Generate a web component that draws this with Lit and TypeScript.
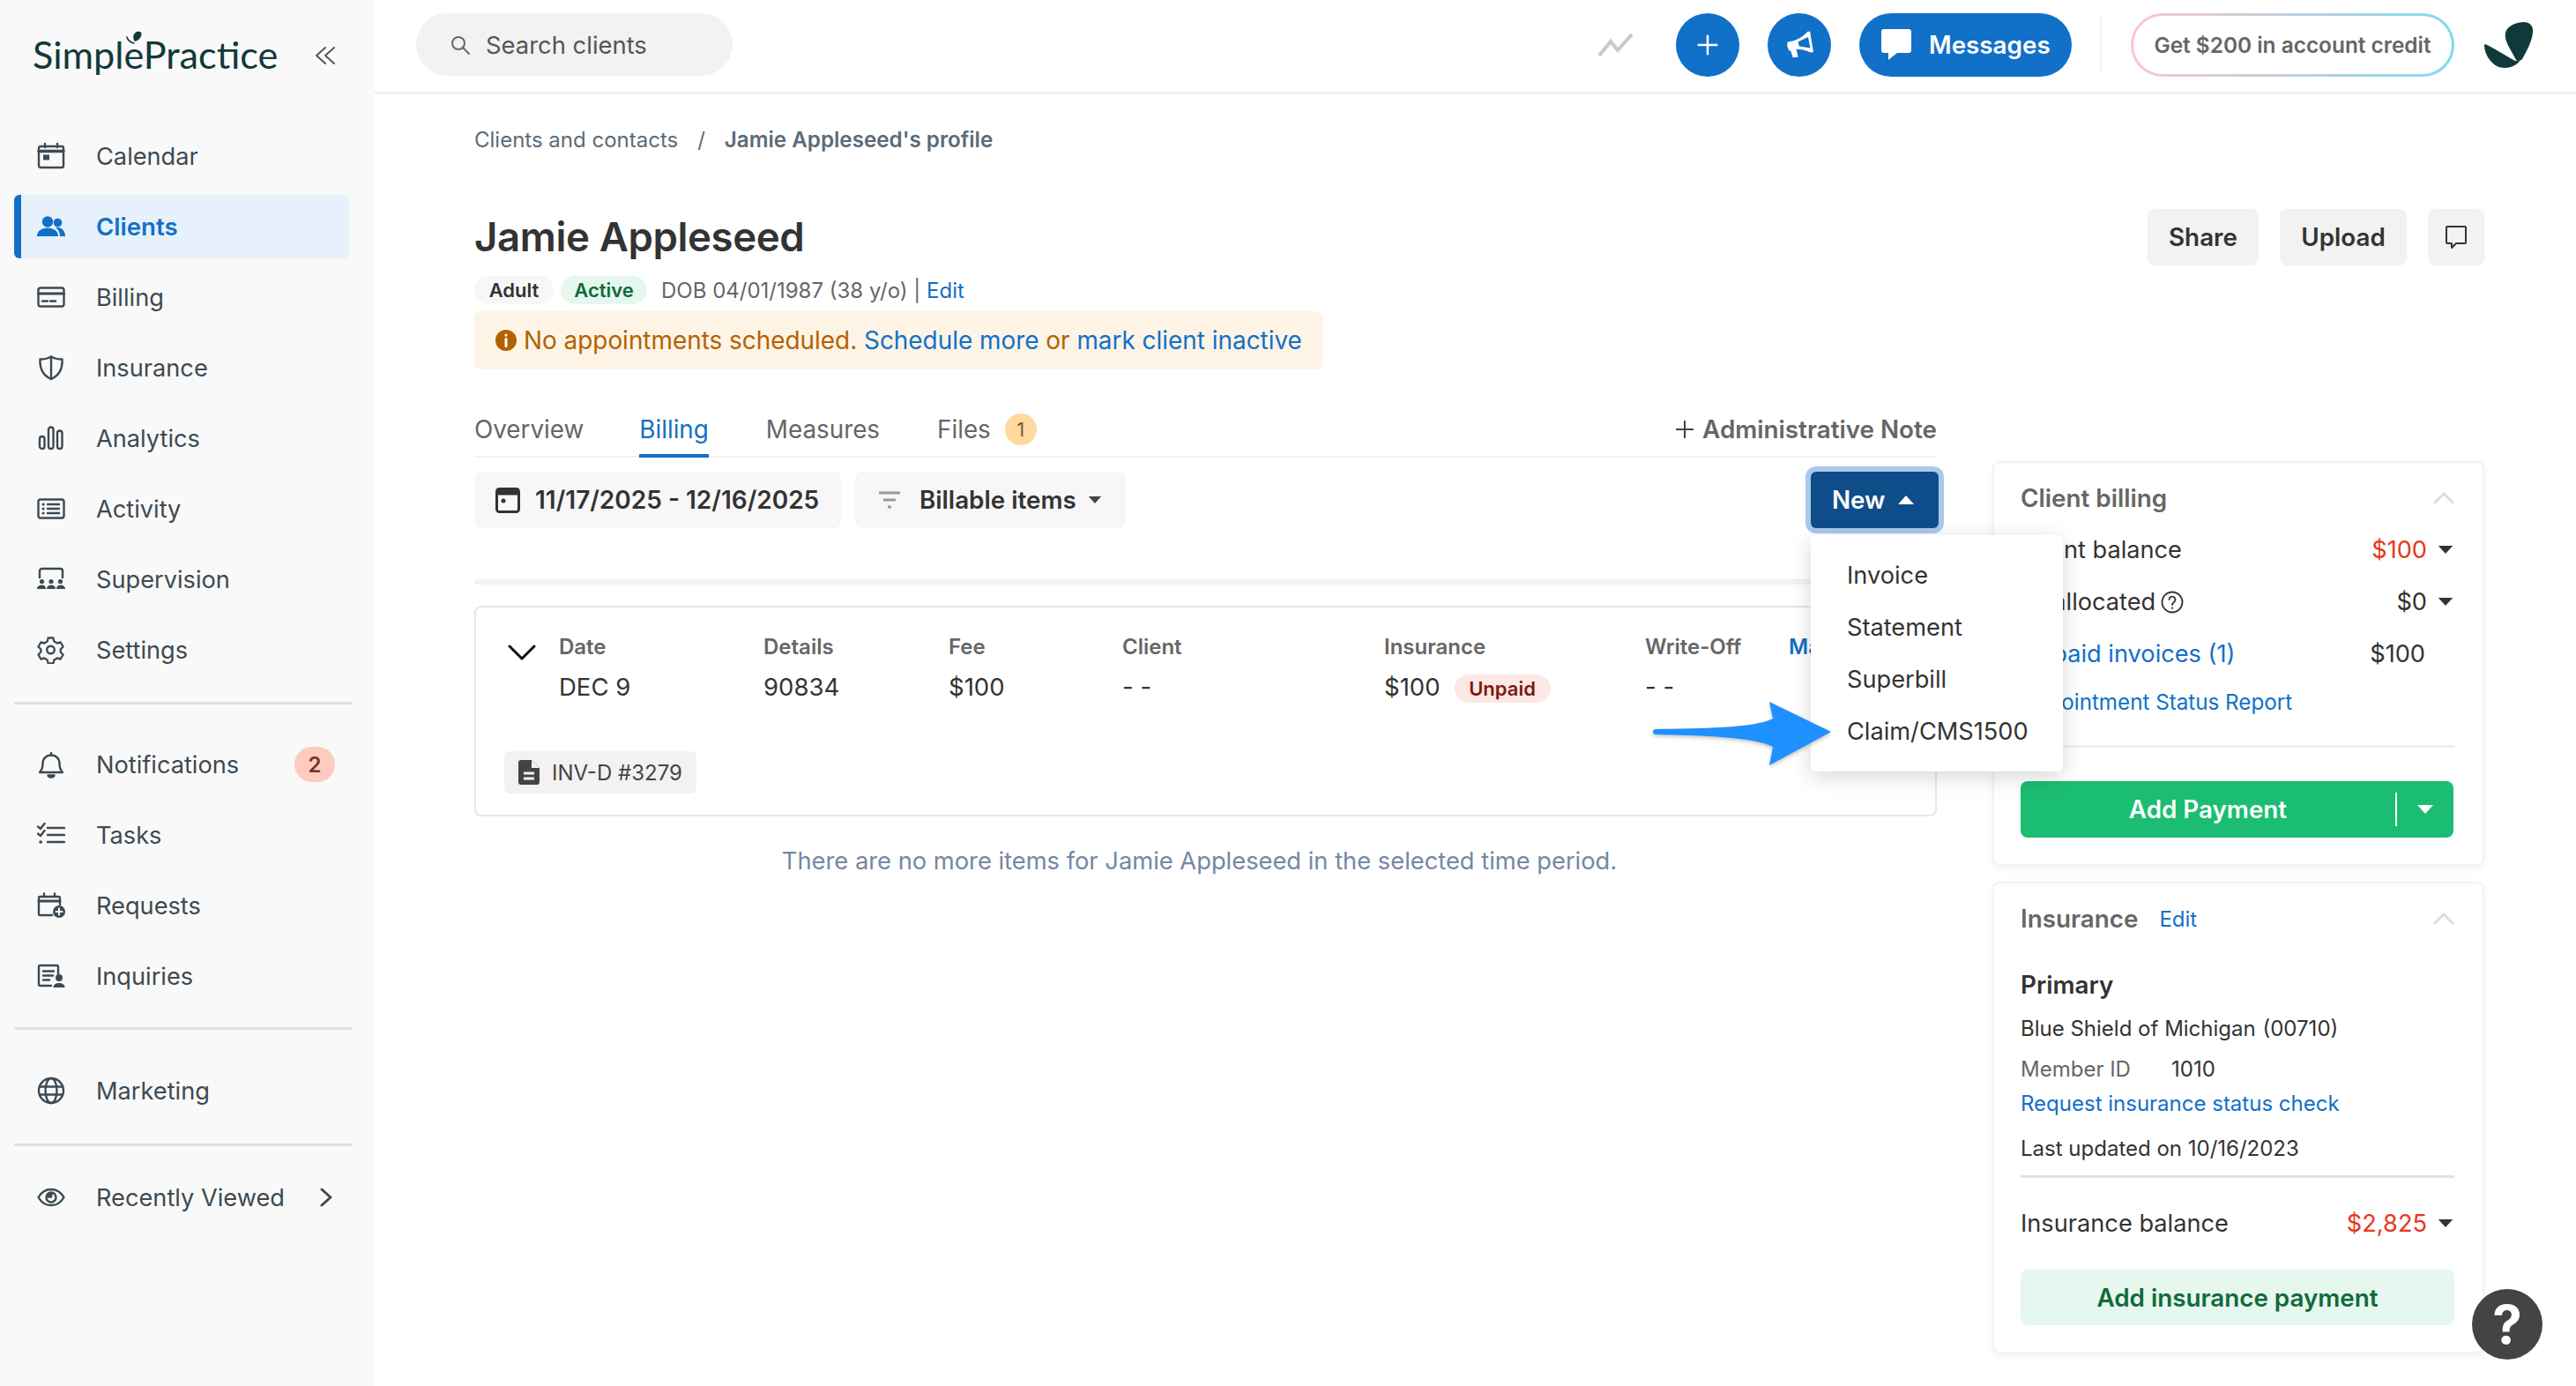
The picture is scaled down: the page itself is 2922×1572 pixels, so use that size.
import { LitElement, html, css, svg } from "lit";
import { customElement } from "lit/decorators.js";

const ic = (body: any, fill = false) => html`<svg class="ic" viewBox="0 0 32 32" fill=${fill ? "currentColor" : "none"} stroke=${fill ? "none" : "currentColor"} stroke-width="2.4" stroke-linecap="round" stroke-linejoin="round">${body}</svg>`;

const icons: Record<string, any> = {
  calendar: ic(svg`<rect x="2" y="5" width="28" height="24" rx="2"/><path d="M2 10.500h28" stroke-width="3.400"/><path d="M9 2v4M23 2v4"/><rect x="7" y="14.500" width="7" height="6" fill="currentColor" stroke="none"/>`),
  clients: ic(svg`<circle cx="12" cy="10.500" r="6.200"/><circle cx="23.500" cy="11.500" r="4.800"/><path d="M0 27c0-6 5-9.500 12-9.500S24 21 24 27z"/><path d="M21 16.800c6-.8 11 3 11 10.200h-6c0-4-1.500-7.500-5-10.200z"/>`, true),
  billing: ic(svg`<rect x="1.500" y="5.500" width="29" height="21" rx="2.500"/><path d="M1.500 12h29" stroke-width="3"/><path d="M6 20.500h6M15 20.500h6"/>`),
  shield: ic(svg`<path d="M16 3.500c4 2.300 8.500 3 12.500 3 .5 9-2.500 18-12.500 22.500C6 24.500 3 15.500 3.500 6.500c4 0 8.500-.7 12.500-3z"/><path d="M16 3.500V29"/>`),
  analytics: ic(svg`<rect x="3" y="14" width="5.500" height="14" rx="2.750"/><rect x="13" y="3.500" width="5.500" height="24.500" rx="2.750"/><rect x="23" y="7.500" width="5.500" height="20.500" rx="2.750"/>`),
  activity: ic(svg`<rect x="1.500" y="5.500" width="29" height="21" rx="2.500"/><path d="M12 11h13M12 16h13M12 21h13"/><path d="M7 11h.2M7 16h.2M7 21h.2" stroke-width="3"/>`),
  supervision: ic(svg`<path d="M3 14V6.500A2.500 2.500 0 0 1 5.500 4h21A2.500 2.500 0 0 1 29 6.500V14"/><g fill="currentColor" stroke="none"><circle cx="5.500" cy="18.500" r="2.600"/><circle cx="16" cy="18.500" r="2.600"/><circle cx="26.500" cy="18.500" r="2.600"/><path d="M0 27c0-3 2.500-4.500 5.500-4.500S10 24 10 27zM11 27c0-3 2-4.500 5-4.500s5 1.500 5 4.500zM22 27c0-3 1.500-4.500 4.500-4.500S32 24 32 27z"/></g>`),
  settings: ic(svg`<path d="M12.500 2.500h6l1 4 3.500 2 4-1 3 5-3 3v3l3 3-3 5-4-1-3.500 2-1 4h-6l-1-4-3.500-2-4 1-3-5 3-3v-3l-3-3 3-5 4 1 3.500-2z" transform="translate(.5 0) scale(.97 1)"/><circle cx="15.500" cy="16" r="4.300"/>`),
  bell: ic(svg`<path d="M3 25c3-3 3.500-6 3.500-10C6.500 9.500 10.500 5.500 16 5.500S25.500 9.500 25.500 15c0 4 .5 7 3.500 10z"/><path d="M16 3v2.500"/><path d="M12.500 28.500h7c-.5 1.300-2 2-3.500 2s-3-.7-3.500-2z" fill="currentColor"/>`),
  tasks: ic(svg`<path d="M12 8h19M12 16h19M12 24h19"/><path d="M1 6.500l3 2.500 4.500-6M1 14.500l3 2.500 4.500-6"/><path d="M4 24h.3" stroke-width="3.500"/>`),
  requests: ic(svg`<path d="M17 27H3.500A1.500 1.500 0 0 1 2 25.500V7.500A1.500 1.500 0 0 1 3.500 6h21A1.500 1.500 0 0 1 26 7.500V15"/><path d="M2 11h24" stroke-width="3"/><path d="M8 2.500V6M20 2.500V6"/><circle cx="25" cy="23" r="7" fill="currentColor" stroke="none"/><path d="M25 19.500v7M21.500 23h7" stroke="#fff" stroke-width="2"/>`),
  inquiries: ic(svg`<path d="M16 27H3.500A1.500 1.500 0 0 1 2 25.500V5.500A1.500 1.500 0 0 1 3.500 4h19A1.500 1.500 0 0 1 24 5.500V14"/><path d="M7 10.500h12M7 15.500h11M7 20.500h7"/><circle cx="25" cy="18" r="4" fill="currentColor" stroke="none"/><path d="M18.500 29c0-3.500 3-5 6.500-5s6.500 1.500 6.500 5z" fill="currentColor" stroke="none"/>`),
  globe: ic(svg`<circle cx="16" cy="16" r="14"/><ellipse cx="16" cy="16" rx="6.500" ry="14"/><path d="M3 11.500h26M3 20.500h26"/>`),
  eye: ic(svg`<path d="M1.500 16C5 10 10 7 16 7s11 3 14.500 9C27 22 22 25 16 25S5 22 1.500 16z"/><circle cx="16" cy="16" r="5.500"/><path d="M12.500 15.500a4 4 0 0 1 4-3.500l-.5 3.500z" fill="currentColor"/>`),
};

const NAV1 = [
  ["calendar", "Calendar"], ["clients", "Clients"], ["billing", "Billing"], ["shield", "Insurance"],
  ["analytics", "Analytics"], ["activity", "Activity"], ["supervision", "Supervision"], ["settings", "Settings"],
];
const NAV2 = [["bell", "Notifications"], ["tasks", "Tasks"], ["requests", "Requests"], ["inquiries", "Inquiries"]];

const COLS = [
  ["Date", "DEC 9"], ["Details", "90834"], ["Fee", "$100"], ["Client", "- -"],
  ["Insurance", "$100"], ["Write-Off", "- -"],
];

const caret = (up = false) => html`<svg class="caret" viewBox="0 0 20 12"><path d=${up ? "M10 1l9 10H1z" : "M1 1h18l-9 10z"} fill="currentColor"/></svg>`;
const chevUp = html`<svg class="chev-up" viewBox="0 0 24 14" fill="none" stroke="currentColor" stroke-width="3" stroke-linecap="round" stroke-linejoin="round"><path d="M2 12L12 2l10 10"/></svg>`;

@customElement("app-root")
export class AppRoot extends LitElement {
  static styles = css`
    :host { display: block; width: 100vw; height: 100vh; overflow: hidden; position: relative; font-family: Inter, "Liberation Sans", sans-serif; font-size: 27.800px; color: #333; background: #fff; }
    * { box-sizing: border-box; }
    a { color: #1170c8; text-decoration: none; }
    .app { display: flex; height: 100%; }
    .side { width: 424px; flex: none; background: #f9f9f9; padding: 0 24px 0 16px; color: #3d4a52; font-size: 27.200px; }
    .logo-row { height: 137px; padding: 31px 0 0 21px; display: flex; align-items: flex-start; position: relative; }
    .logo { font-family: Lato, sans-serif; font-size: 43.200px; line-height: 60px; color: #12393a; position: relative; }
    .leaf { position: absolute; left: 106px; top: 4px; width: 18px; height: 18px; }
    .collapse { position: absolute; left: 341px; top: 51px; width: 24px; height: 24px; color: #555; }
    .nav-item { height: 80px; display: flex; align-items: center; padding-left: 26px; }
    .nav-item.active { height: 72px; margin: 4px 4px 4px 0; color: #1170c8; background: #e7f1fb; border-left: 8px solid #1170c8; border-radius: 6px; padding-left: 18px; font-weight: 600; font-size: 27.600px; }
    .ic { width: 32px; height: 32px; flex: none; }
    .nav-label { margin-left: 35px; flex: 1; white-space: nowrap; }
    .nav-badge { width: 46px; height: 40px; border-radius: 20px; background: #fdcbc0; color: #7c3026; font-size: 24px; font-weight: 600; display: flex; align-items: center; justify-content: center; margin-right: 20px; }
    .nav-chev { width: 14px; height: 24px; margin-right: 23px; }
    .nav-sep { height: 3px; background: #e1e1e1; }
    .sep-a { margin-top: 19px; margin-bottom: 28px; }
    .sep-b { margin-top: 18px; margin-bottom: 29px; }
    .sep-c { margin-top: 20px; margin-bottom: 18px; }

    .main { flex: 1; min-width: 0; display: flex; flex-direction: column; }
    .top { height: 107px; flex: none; border-bottom: 3px solid #f2f2f2; display: flex; align-items: center; padding: 0 0 3px 48px; }
    .search { width: 359px; height: 71px; border-radius: 36px; background: #f2f2f2; display: flex; align-items: center; padding-left: 38px; color: #555; gap: 17px; font-size: 27.400px; }
    .search svg { width: 24px; height: 24px; color: #666; }
    .spacer { flex: 1; }
    .trend { width: 40px; height: 28px; color: #c9c9c9; margin-right: 48px; }
    .circle { width: 72px; height: 72px; border-radius: 50%; background: #1170c8; color: #fff; display: flex; align-items: center; justify-content: center; margin-right: 32px; }
    .circle svg { width: 34px; height: 34px; }
    .circle svg.mega { width: 31px; height: 31px; }
    .msg { width: 241px; height: 72px; border-radius: 36px; background: #1170c8; color: #fff; font-weight: 600; display: flex; align-items: center; padding-left: 25px; gap: 19px; }
    .msg svg { width: 35px; height: 36px; }
    .vsep { width: 2px; height: 64px; background: #f2f2f2; margin: 0 33px 0 32px; }
    .credit { width: 367px; height: 72px; border-radius: 36px; border: 3px solid transparent; background: linear-gradient(#fff, #fff) padding-box, linear-gradient(90deg, #fcc7cb, #7fd8f0) border-box; color: #666; font-size: 24.400px; font-weight: 600; display: flex; align-items: center; justify-content: center; white-space: nowrap; }
    .brand { width: 58px; height: 54px; margin: 0 47px 0 33px; }

    .content { padding: 31px 104px 0 114px; flex: 1; min-height: 0; }
    .crumbs { height: 40px; display: flex; align-items: center; font-size: 24px; color: #5b6b78; }
    .crumbs .slash { margin: 0 22px; }
    .crumbs b { font-weight: 600; font-size: 24.200px; }
    .title-row { margin-top: 59px; height: 64px; display: flex; align-items: center; }
    h1 { margin: -2px 0 0; font-size: 45.600px; font-weight: 600; color: #333; flex: 1; letter-spacing: -0.4px; }
    .gbtn { height: 64px; background: #f2f2f2; border-radius: 8px; display: flex; align-items: center; justify-content: center; font-weight: 600; margin-left: 24px; }
    .gbtn.share { width: 126px; }
    .gbtn.upload { width: 144px; }
    .gbtn.cmt { width: 64px; }
    .gbtn svg { width: 26px; height: 28px; }
    .meta { margin-top: 12px; height: 32px; display: flex; align-items: center; font-size: 24px; color: #666; }
    .pill { height: 32px; border-radius: 16px; display: flex; align-items: center; justify-content: center; font-size: 22px; font-weight: 600; margin-right: 8px; }
    .pill.adult { width: 90px; background: #f7f7f7; color: #333; }
    .pill.act { width: 98px; background: #e6f7ef; color: #0f6b3a; margin-right: 16px; }
    .banner { margin-top: 8px; width: 963px; height: 66px; border-radius: 8px; background: #fef4e5; color: #b36200; display: flex; align-items: center; padding-left: 24px; white-space: pre; font-size: 27.900px; }
    .banner svg { width: 24px; height: 24px; margin-right: 8px; flex: none; }
    .cols { margin-top: 40px; display: flex; justify-content: space-between; }
    .left { width: 1659px; }
    .right { width: 558px; margin-top: 64px; display: flex; flex-direction: column; gap: 18px; font-size: 27.200px; }
    .tabs { height: 60px; display: flex; box-shadow: inset 0 -2px #f2f2f2; color: #666; }
    .tab { height: 60px; border-bottom: 4px solid transparent; display: flex; align-items: center; margin-right: 65px; }
    .tab:first-child { margin-right: 63px; }
    .tab.on { color: #1170c8; border-color: #1170c8; }
    .tab-badge { width: 36px; height: 36px; border-radius: 50%; background: #ffd9a0; color: #7a5a20; font-size: 22px; display: flex; align-items: center; justify-content: center; margin-left: 16px; }
    .note { margin-left: auto; display: flex; align-items: center; height: 56px; font-weight: 600; gap: 8px; }
    .note svg { width: 24px; height: 24px; }
    .filters { margin-top: 16px; display: flex; align-items: center; font-weight: 600; }
    .fbtn { height: 64px; border-radius: 8px; background: #f7f7f7; display: flex; align-items: center; }
    .fbtn.date { width: 416px; padding-left: 24px; gap: 17px; font-size: 28px; }
    .fbtn.date svg { width: 28px; height: 30px; flex: none; }
    .fbtn.bill { width: 307px; margin-left: 16px; padding-left: 26px; gap: 21px; }
    .fbtn.bill > svg:first-child { width: 26px; height: 26px; color: #999; flex: none; }
    .caret { width: 16px; height: 10px; flex: none; }
    .fbtn.bill .caret { margin-left: -8px; color: #444; }
    .new-wrap { margin-left: auto; position: relative; margin-right: -2px; }
    .new { width: 145px; height: 64px; background: #0f4c8a; color: #fff; border-radius: 6px; box-shadow: 0 0 0 6px #a9c9ea; display: flex; align-items: center; padding-left: 24px; gap: 14px; }
    .new .caret { width: 20px; height: 12px; }
    .menu { position: absolute; z-index: 5; left: 0; top: 72px; width: 286px; height: 268px; background: #fff; border-radius: 6px; box-shadow: 0 6px 24px rgba(0, 0, 0, .16); padding: 16px 0 0 41px; font-weight: 400; font-size: 27.200px; }
    .menu div { height: 59px; display: flex; align-items: center; white-space: nowrap; }
    .gline { margin-top: 58px; height: 6px; background: #f2f2f2; }
    .card { margin-top: 24px; height: 239px; border: 2px solid #e6e6e6; border-radius: 8px; padding: 28px 0 0 32px; }
    .rowtop { display: flex; padding-left: 4px; }
    .chev { width: 32px; height: 18px; margin: 14px 26px 0 0; flex: none; color: #111; }
    .grid { display: grid; grid-template-columns: 232px 210px 197px 297px 296px 163px auto; column-gap: 0; }
    .th { font-size: 24px; line-height: 34px; font-weight: 600; color: #666; }
    .td { margin-top: 8px; line-height: 40px; display: flex; align-items: center; white-space: nowrap; font-size: 27.500px; }
    .unpaid { width: 109px; height: 32px; border-radius: 16px; background: #fce8e5; color: #7c1a0c; font-size: 22px; font-weight: 600; display: flex; align-items: center; justify-content: center; margin: 3px 0 0 16px; }
    .inv { margin-top: 53px; width: 218px; height: 48px; border-radius: 6px; background: #f2f2f2; display: flex; align-items: center; padding-left: 16px; gap: 14px; font-size: 24px; color: #444; }
    .inv svg { width: 24px; height: 28px; flex: none; }
    .none { margin-top: 31px; padding-right: 14px; line-height: 40px; text-align: center; color: #7488a3; font-size: 27.300px; }

    .bcard { border: 2px solid #f2f2f2; border-radius: 8px; box-shadow: 0 4px 10px rgba(0, 0, 0, .05); padding: 20px 32px 0 30px; background: #fff; }
    .bcard.c1 { height: 459px; }
    .bcard.c2 { height: 535px; }
    .bhead { display: flex; align-items: center; height: 40px; font-weight: 600; color: #666; font-size: 27.800px; }
    .bhead a { font-size: 24px; font-weight: 400; margin-left: 24px; }
    .chev-up { width: 24px; height: 14px; margin-left: auto; color: #dcdcdc; }
    .brow { height: 59px; display: flex; align-items: center; white-space: nowrap; }
    .brow .val { margin-left: auto; }
    .red { color: #e8381a; }
    .brow .caret { width: 20px; height: 11px; margin-left: 11px; color: #333; }
    .brow .gap { width: 33px; }
    .q { width: 26px; height: 26px; margin-left: 6px; color: #333; }
    .report { font-size: 24.200px; height: 40px; display: flex; align-items: center; margin-top: 5px; }
    .bsep { height: 3px; background: #efefef; }
    .addpay { margin-top: 38px; width: 491px; height: 64px; border-radius: 8px; background: #1bbd72; color: #fff; font-weight: 600; font-size: 27.800px; display: flex; align-items: center; }
    .addpay .lbl { width: 425px; text-align: center; }
    .addpay i { width: 2px; height: 38px; background: #fff; }
    .addpay .caret { margin-left: 22px; width: 20px; height: 12px; }
    .prim { font-weight: 600; margin-top: 35px; line-height: 40px; font-size: 27.800px; }
    .small { font-size: 24px; line-height: 36px; color: #333; }
    .code { margin-left: 1px; }
    .muted { color: #666; display: inline-block; width: 171px; }
    .ins-sep { height: 3px; background: #e1e1e1; margin-top: 12px; }
    .addins { margin-top: 23px; height: 63px; border-radius: 8px; background: #e6f7ef; color: #0f6b3a; font-weight: 600; font-size: 27.800px; display: flex; align-items: center; justify-content: center; }
    .help { position: absolute; left: 2804px; top: 1462px; width: 80px; height: 80px; border-radius: 50%; background: #444; color: #fff; font-size: 60px; font-weight: 700; display: flex; align-items: center; justify-content: center; z-index: 6; }
    .arrow { position: absolute; left: 1870px; top: 790px; width: 215px; height: 90px; z-index: 7; filter: drop-shadow(0 2px 2px rgba(0, 0, 0, .25)); }
    .bal { margin-top: 22px; }
  `;

  private navItem(i: string, label: string, active = false, extra: any = null) {
    return html`<div class="nav-item ${active ? "active" : ""}">${icons[i]}<span class="nav-label">${label}</span>${extra}</div>`;
  }

  render() {
    return html`
      <div class="app">
        <aside class="side">
          <div class="logo-row">
            <div class="logo">SimplePractice
              <svg class="leaf" viewBox="0 0 18 18"><path d="M10 12C7 8 8 3 12 1c3-1 6 0 5.500 3C17 8 14 11 10 12z" fill="#12393a"/><path d="M1 7c1 4 4 6 8 7" fill="none" stroke="#12393a" stroke-width="1.600" stroke-linecap="round"/></svg>
            </div>
            <svg class="collapse" viewBox="0 0 24 24" fill="none" stroke="currentColor" stroke-width="2" stroke-linecap="round" stroke-linejoin="round"><path d="M12 3L2 12l10 9M22 3L12 12l10 9"/></svg>
          </div>
          ${NAV1.map(([i, l]) => this.navItem(i, l, l === "Clients"))}
          <div class="nav-sep sep-a"></div>
          ${NAV2.map(([i, l]) => this.navItem(i, l, false, l === "Notifications" ? html`<span class="nav-badge">2</span>` : null))}
          <div class="nav-sep sep-b"></div>
          ${this.navItem("globe", "Marketing")}
          <div class="nav-sep sep-c"></div>
          ${this.navItem("eye", "Recently Viewed", false, html`<svg class="nav-chev" viewBox="0 0 14 24" fill="none" stroke="currentColor" stroke-width="3" stroke-linecap="round" stroke-linejoin="round"><path d="M2 3l10 9-10 9"/></svg>`)}
        </aside>
        <div class="main">
          <header class="top">
            <div class="search">
              <svg viewBox="0 0 24 24" fill="none" stroke="currentColor" stroke-width="2"><circle cx="10" cy="10" r="7"/><path d="M15.500 15.500L22 22" stroke-linecap="round"/></svg>
              <span>Search clients</span>
            </div>
            <div class="spacer"></div>
            <svg class="trend" viewBox="0 0 40 28" fill="none" stroke="currentColor" stroke-width="4" stroke-linejoin="miter"><path d="M1 26L14 10l8 10L38 2"/></svg>
            <div class="circle"><svg viewBox="0 0 24 24" fill="none" stroke="currentColor" stroke-width="1.800"><path d="M12 4v16M4 12h16"/></svg></div>
            <div class="circle"><svg class="mega" viewBox="0 0 24 24" fill="currentColor" fill-rule="evenodd"><path d="M19 .5h2L24 18.500l-2.500.5C17 16.500 13 16 9 16l1.500 7-4.500.5-2-6H2.600C1 14 .5 12 1.300 9.800 8 9 14 6 19 .5zM10.500 9.700l8.800-4.200 2 9.500-9.800-1.500z"/></svg></div>
            <div class="msg"><svg viewBox="0 0 35 36" fill="currentColor"><path d="M3 0h28a3 3 0 0 1 3 3v21a3 3 0 0 1-3 3H18L8 35v-8H3a3 3 0 0 1-3-3V3a3 3 0 0 1 3-3z"/></svg>Messages</div>
            <div class="vsep"></div>
            <div class="credit">Get $200 in account credit</div>
            <svg class="brand" viewBox="27 13 58 54"><path d="M64 57C58 45 50 35 52 26c2-8 13-12 21-12 7 0 11 5 10 12-1 10-7 21-12 30-2 2-5 2-7 1z" fill="#12393a"/><path d="M29 39c11 5 23 13 34 19l6-1c-4 6-11 9-18 9-13 0-23-14-23-26z" fill="#12393a"/></svg>
          </header>
          <div class="content">
            <div class="crumbs">Clients and contacts<span class="slash">/</span><b>Jamie Appleseed's profile</b></div>
            <div class="title-row">
              <h1>Jamie Appleseed</h1>
              <div class="gbtn share">Share</div>
              <div class="gbtn upload">Upload</div>
              <div class="gbtn cmt"><svg viewBox="0 0 26 28" fill="none" stroke="#333" stroke-width="2" stroke-linejoin="round"><path d="M3 2h20a1 1 0 0 1 1 1v17a1 1 0 0 1-1 1H13l-5 5v-5H3a1 1 0 0 1-1-1V3a1 1 0 0 1 1-1z"/></svg></div>
            </div>
            <div class="meta"><span class="pill adult">Adult</span><span class="pill act">Active</span>DOB 04/01/1987 (38 y/o) |&nbsp;<a>Edit</a></div>
            <div class="banner"><svg viewBox="0 0 24 24"><circle cx="12" cy="12" r="12" fill="#b36200"/><path d="M12 10.500v8M12 6v.2" stroke="#fff" stroke-width="3" stroke-linecap="round"/></svg>No appointments scheduled. <a>Schedule more</a> or <a>mark client inactive</a></div>
            <div class="cols">
              <div class="left">
                <div class="tabs">
                  <div class="tab">Overview</div>
                  <div class="tab on">Billing</div>
                  <div class="tab">Measures</div>
                  <div class="tab">Files<span class="tab-badge">1</span></div>
                  <div class="note"><svg viewBox="0 0 24 24" fill="none" stroke="#444" stroke-width="2"><path d="M12 2v20M2 12h20"/></svg>Administrative Note</div>
                </div>
                <div class="filters">
                  <div class="fbtn date"><svg viewBox="0 0 28 30"><rect x="1.500" y="2.500" width="25" height="26" rx="3" fill="none" stroke="#333" stroke-width="3"/><rect x="1.500" y="2.500" width="25" height="7" fill="#333"/><circle cx="9" cy="16" r="2.500" fill="#333"/></svg>11/17/2025 - 12/16/2025</div>
                  <div class="fbtn bill"><svg viewBox="0 0 26 26" fill="none" stroke="currentColor" stroke-width="3"><path d="M1 5h24M6 13h14M11 21h4"/></svg>Billable items ${caret()}</div>
                  <div class="new-wrap">
                    <div class="new">New ${caret(true)}</div>
                    <div class="menu"><div>Invoice</div><div>Statement</div><div>Superbill</div><div>Claim/CMS1500</div></div>
                  </div>
                </div>
                <div class="gline"></div>
                <div class="card">
                  <div class="rowtop">
                    <svg class="chev" viewBox="0 0 32 18" fill="none" stroke="currentColor" stroke-width="3" stroke-linecap="round" stroke-linejoin="round"><path d="M2 2l14 14L30 2"/></svg>
                    <div class="grid">
                      ${COLS.map(([h]) => html`<div class="th">${h}</div>`)}
                      <div class="th"><a>Manage</a></div>
                      ${COLS.map(([h, v]) => html`<div class="td">${v}${h === "Insurance" ? html`<span class="unpaid">Unpaid</span>` : null}</div>`)}
                    </div>
                  </div>
                  <div class="inv"><svg viewBox="0 0 24 28"><path d="M3 0h12l9 9v16a3 3 0 0 1-3 3H3a3 3 0 0 1-3-3V3a3 3 0 0 1 3-3z" fill="#444"/><path d="M15 0l9 9h-9z" fill="#f2f2f2"/><path d="M6 15h12M6 21h12" stroke="#f2f2f2" stroke-width="3"/></svg>INV-D #3279</div>
                </div>
                <div class="none">There are no more items for Jamie Appleseed in the selected time period.</div>
              </div>
              <div class="right">
                <section class="bcard c1">
                  <div class="bhead">Client billing${chevUp}</div>
                  <div class="brow" style="margin-top:9px">Client balance<span class="val red">$100</span>${caret()}</div>
                  <div class="brow">Unallocated<svg class="q" viewBox="0 0 26 26" fill="none" stroke="currentColor" stroke-width="1.800"><circle cx="13" cy="13" r="11.500"/><path d="M9.500 10a3.500 3.500 0 1 1 5.500 3c-1.300 1-2 1.500-2 3" stroke-linecap="round"/><path d="M13 19.500v.2" stroke-width="2.200" stroke-linecap="round"/></svg><span class="val">$0</span>${caret()}</div>
                  <div class="brow"><a>Unpaid invoices (1)</a><span class="val">$100</span><span class="gap"></span></div>
                  <div class="report"><a>Appointment Status Report</a></div>
                  <div class="bsep" style="margin-top:29px"></div>
                  <div class="addpay"><span class="lbl">Add Payment</span><i></i>${caret()}</div>
                </section>
                <section class="bcard c2">
                  <div class="bhead">Insurance<a>Edit</a>${chevUp}</div>
                  <div class="prim">Primary</div>
                  <div class="small" style="margin-top:12px">Blue Shield of Michigan <span class="code">(00710)</span></div>
                  <div class="small" style="margin-top:10px"><span class="muted">Member ID</span>1010</div>
                  <div class="small" style="margin-top:3px"><a>Request insurance status check</a></div>
                  <div class="small" style="margin-top:15px">Last updated on 10/16/2023</div>
                  <div class="ins-sep"></div>
                  <div class="brow bal">Insurance balance<span class="val red">$2,825</span>${caret()}</div>
                  <div class="addins">Add insurance payment</div>
                </section>
              </div>
            </div>
          </div>
        </div>
      </div>
      <svg class="arrow" viewBox="0 0 215 90"><path d="M8 37C60 36 120 36 141 25L137 6l70 34-70 38 4-21C120 46 60 44 8 43a3 3 0 0 1 0-6z" fill="#1e90ff"/></svg>
      <div class="help">?</div>
    `;
  }
}
